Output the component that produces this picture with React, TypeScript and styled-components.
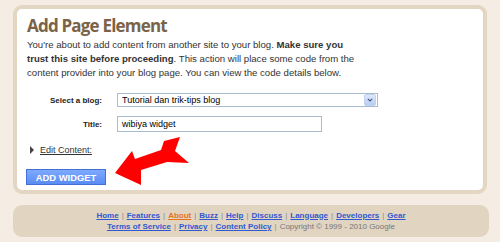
import React from 'react';
import styled, { createGlobalStyle } from 'styled-components';

const GlobalStyle = createGlobalStyle`
  html, body {
    margin: 0;
    padding: 0;
    background: #f5ede3;
  }
  body {
    width: 500px;
    height: 242px;
    overflow: hidden;
    font-family: "Liberation Sans", Arial, sans-serif;
  }
`;

const Page = styled.div`
  padding: 5px 0 0 13px;
`;

const Panel = styled.div`
  position: relative;
  background: #fff;
  border: 4px solid #e3d6c2;
  border-radius: 9px;
  width: 446px;
  height: 174px;
  padding: 7px 10px 0 10px;
`;

const Title = styled.h1`
  margin: 0;
  font-family: "Open Sans", sans-serif;
  font-size: 17px;
  font-weight: 700;
  color: #7b6349;
  line-height: 20px;
  letter-spacing: -0.8px;
`;

const Intro = styled.div`
  margin-top: 2px;
  font-family: "Liberation Sans", Arial, sans-serif;
  font-size: 9.6px;
  line-height: 14px;
  color: #333;

  b {
    font-weight: 700;
  }
`;

const IntroLine = styled.div`
  white-space: nowrap;
`;

const Form = styled.div`
  margin-top: 13px;
  display: grid;
  grid-template-columns: 75px auto;
  column-gap: 15px;
  row-gap: 9px;
  align-items: center;
`;

const Label = styled.label`
  text-align: right;
  font-family: "Liberation Sans", Arial, sans-serif;
  font-size: 8px;
  font-weight: 700;
  color: #222;
`;

const Field = styled.div<{ $w: number; $h: number }>`
  width: ${(p) => p.$w}px;
  height: ${(p) => p.$h}px;
  box-sizing: border-box;
  border: 1px solid #a9bccf;
  display: flex;
  align-items: center;
  font-family: "Liberation Sans", Arial, sans-serif;
  font-size: 9px;
  color: #000;
  padding-left: 4px;
  background: #fff;
`;

const FieldText = styled.span`
  flex: 1;
`;

const DropButton = styled.span`
  width: 10px;
  height: 10px;
  margin-right: 1px;
  background: linear-gradient(#dde8fc, #b8cdf6);
  border: 1px solid #c2d2ee;
  border-radius: 2px;
  display: flex;
  align-items: center;
  justify-content: center;
`;

const EditRow = styled.div`
  margin-top: 12px;
  height: 12px;
  display: flex;
  align-items: center;
  gap: 6px;
  padding-left: 3px;
  font-family: "Liberation Sans", Arial, sans-serif;
  font-size: 9px;
  color: #333;
`;

const EditLink = styled.span`
  text-decoration: underline;
`;

const Triangle = styled.i`
  width: 0;
  height: 0;
  border-top: 4px solid transparent;
  border-bottom: 4px solid transparent;
  border-left: 4px solid #444;
`;

const Button = styled.button`
  margin: 13px 0 0 -1px;
  width: 80px;
  height: 16px;
  padding: 0;
  border: 1px solid #4271d6;
  background: linear-gradient(#7ea9ff, #5a8cf3);
  color: #fff;
  font-family: "Liberation Sans", Arial, sans-serif;
  font-size: 9.4px;
  font-weight: 700;
  display: block;
`;

const RedArrow = styled.svg`
  position: absolute;
  left: 93px;
  top: 124px;
`;

const Footer = styled.div`
  margin-top: 11px;
  height: 32px;
  background: #e1d5c2;
  border-radius: 9px;
  width: 476px;
  display: flex;
  flex-direction: column;
  align-items: center;
  justify-content: center;
  font-family: "Liberation Sans", Arial, sans-serif;
  font-size: 8px;
  line-height: 11.5px;
  color: #888;
`;

const Line = styled.div`
  white-space: nowrap;
`;

const FLink = styled.a<{ $active?: boolean }>`
  color: ${(p) => (p.$active ? '#e8701f' : '#3158d0')};
  font-weight: 700;
  text-decoration: underline;
`;

const Sep = styled.span`
  color: #8a8a8a;
  margin: 0 3px;
`;

const Copy = styled.span`
  color: #777;
`;

const line1 = ['Home', 'Features', 'About', 'Buzz', 'Help', 'Discuss', 'Language', 'Developers', 'Gear'];
const line2 = ['Terms of Service', 'Privacy', 'Content Policy'];

export default function App() {
  return (
    <Page>
      <GlobalStyle />
      <Panel>
        <Title>Add Page Element</Title>
        <Intro>
          <IntroLine>
            You're about to add content from another site to your blog. <b>Make sure you</b>
          </IntroLine>
          <IntroLine>
            <b>trust this site before proceeding</b>. This action will place some code from the
          </IntroLine>
          <IntroLine>content provider into your blog page. You can view the code details below.</IntroLine>
        </Intro>
        <Form>
          <Label>Select a blog:</Label>
          <Field $w={261} $h={14}>
            <FieldText>Tutorial dan trik-tips blog</FieldText>
            <DropButton>
              <svg width="6" height="4" viewBox="0 0 6 4">
                <path d="M0.8 0.8 L3 3 L5.2 0.8" stroke="#4a5a7a" strokeWidth="1.2" fill="none" />
              </svg>
            </DropButton>
          </Field>
          <Label>Title:</Label>
          <Field $w={205} $h={16}>
            <FieldText>wibiya widget</FieldText>
          </Field>
        </Form>
        <EditRow>
          <Triangle />
          <EditLink>Edit Content:</EditLink>
        </EditRow>
        <Button>ADD WIDGET</Button>
        <RedArrow width="85" height="57" viewBox="110 133 85 57">
          <polygon
            points="115,173 132,151 135,159 161,150 164,141 180,137 175,151 189,163 167,162 141,170 141,185"
            fill="#f00"
          />
        </RedArrow>
      </Panel>
      <Footer>
        <Line>
          {line1.map((l, i) => (
            <React.Fragment key={l}>
              {i > 0 && <Sep>|</Sep>}
              <FLink $active={l === 'About'}>{l}</FLink>
            </React.Fragment>
          ))}
        </Line>
        <Line>
          {line2.map((l, i) => (
            <React.Fragment key={l}>
              {i > 0 && <Sep>|</Sep>}
              <FLink>{l}</FLink>
            </React.Fragment>
          ))}
          <Sep>|</Sep>
          <Copy>Copyright © 1999 - 2010 Google</Copy>
        </Line>
      </Footer>
    </Page>
  );
}
